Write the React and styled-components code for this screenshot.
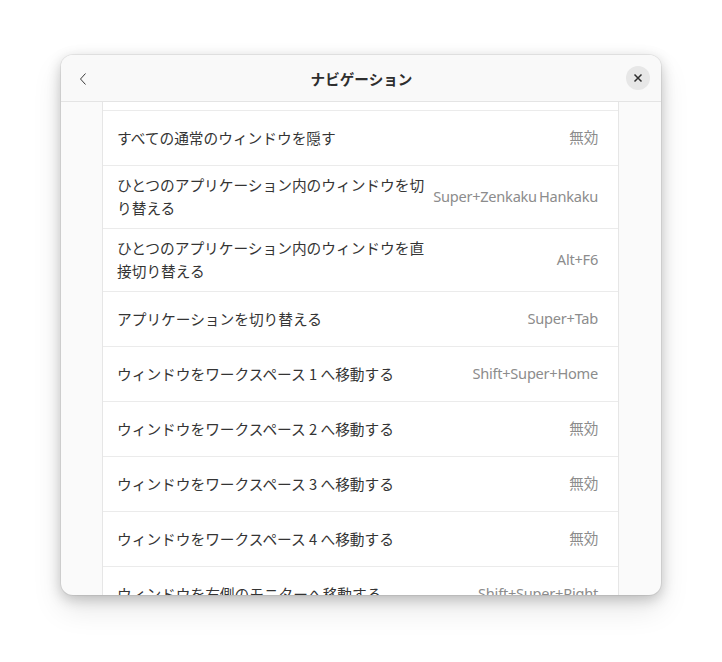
import React from "react";
import styled, { createGlobalStyle } from "styled-components";

const Global = createGlobalStyle`
  html, body {
    margin: 0;
    padding: 0;
    background: #ffffff;
  }
  body {
    font-family: "Noto Sans CJK JP", "Noto Sans", sans-serif;
  }
`;

const Page = styled.div`
  width: 722px;
  height: 662px;
  padding: 55px 61px 0 61px;
  box-sizing: border-box;
`;

const Window = styled.div`
  width: 600px;
  height: 540px;
  border-radius: 12px;
  background: #fafafa;
  overflow: hidden;
  display: flex;
  flex-direction: column;
  box-shadow: 0 0 0 1px rgba(0, 0, 0, 0.06), 0 4px 14px rgba(0, 0, 0, 0.22),
    0 14px 30px rgba(0, 0, 0, 0.1);
`;

const HeaderBar = styled.header`
  flex: 0 0 46px;
  display: flex;
  align-items: center;
  justify-content: space-between;
  padding: 0 11px 0 18px;
  background: #f9f9f9;
  border-bottom: 1px solid #e4e4e4;
  position: relative;
  z-index: 1;
`;

const BackButton = styled.span`
  width: 14px;
  padding-top: 1px;
  display: flex;
  align-items: center;
`;

const Title = styled.h1`
  margin: 0 0 0 4px;
  font-size: 14.6px;
  font-weight: 700;
  color: #2e2e2e;
`;

const CloseButton = styled.span`
  width: 24px;
  height: 24px;
  border-radius: 50%;
  background: #e7e7e7;
  display: flex;
  align-items: center;
  justify-content: center;
`;

const Content = styled.div`
  flex: 1;
  overflow: hidden;
  padding: 0 42px 0 41px;
`;

const List = styled.ul`
  list-style: none;
  margin: -47px 0 0 0;
  padding: 0;
  background: #ffffff;
  border: 1px solid #e6e6e6;
  border-top: none;
`;

const Row = styled.li`
  min-height: 55px;
  box-sizing: border-box;
  display: flex;
  align-items: center;
  justify-content: space-between;
  gap: 3px;
  padding: 7px 20px 9px 14px;
  border-top: 1px solid #ebebeb;
  &:first-child {
    border-top: none;
  }
`;

const Label = styled.span`
  font-size: 14.7px;
  line-height: 23px;
  color: #343434;
  max-width: 312px;
`;

const Accel = styled.span`
  font-size: 14.6px;
  line-height: 23px;
  color: #8c8c8c;
  white-space: nowrap;
  font-family: "Noto Sans", "Noto Sans CJK JP", sans-serif;
  letter-spacing: -0.25px;
  word-spacing: -1.5px;
`;

const rows = [
  ["ウィンドウを切り替える", "無効"],
  ["すべての通常のウィンドウを隠す", "無効"],
  ["ひとつのアプリケーション内のウィンドウを切り替える", "Super+Zenkaku Hankaku"],
  ["ひとつのアプリケーション内のウィンドウを直接切り替える", "Alt+F6"],
  ["アプリケーションを切り替える", "Super+Tab"],
  ["ウィンドウをワークスペース 1 へ移動する", "Shift+Super+Home"],
  ["ウィンドウをワークスペース 2 へ移動する", "無効"],
  ["ウィンドウをワークスペース 3 へ移動する", "無効"],
  ["ウィンドウをワークスペース 4 へ移動する", "無効"],
  ["ウィンドウを右側のモニターへ移動する", "Shift+Super+Right"],
  ["ウィンドウを左側のモニターへ移動する", "Shift+Super+Left"],
];

const App = () => {
  return (
    <>
      <Global />
      <Page>
        <Window>
          <HeaderBar>
            <BackButton>
              <svg width="8" height="12" viewBox="0 0 8 12">
                <path d="M6.5 0.5 L1.5 6 L6.5 11.5" fill="none" stroke="#3a3a3a" strokeWidth="1" />
              </svg>
            </BackButton>
            <Title>ナビゲーション</Title>
            <CloseButton>
              <svg width="10" height="10" viewBox="0 0 10 10">
                <path d="M1.5 1.5 L8.5 8.5 M8.5 1.5 L1.5 8.5" stroke="#2e2e2e" strokeWidth="1.5" />
              </svg>
            </CloseButton>
          </HeaderBar>
          <Content>
            <List>
              {rows.map(([label, accel]) => (
                <Row key={label}>
                  <Label>{label}</Label>
                  <Accel>{accel}</Accel>
                </Row>
              ))}
            </List>
          </Content>
        </Window>
      </Page>
    </>
  );
};

export default App;
